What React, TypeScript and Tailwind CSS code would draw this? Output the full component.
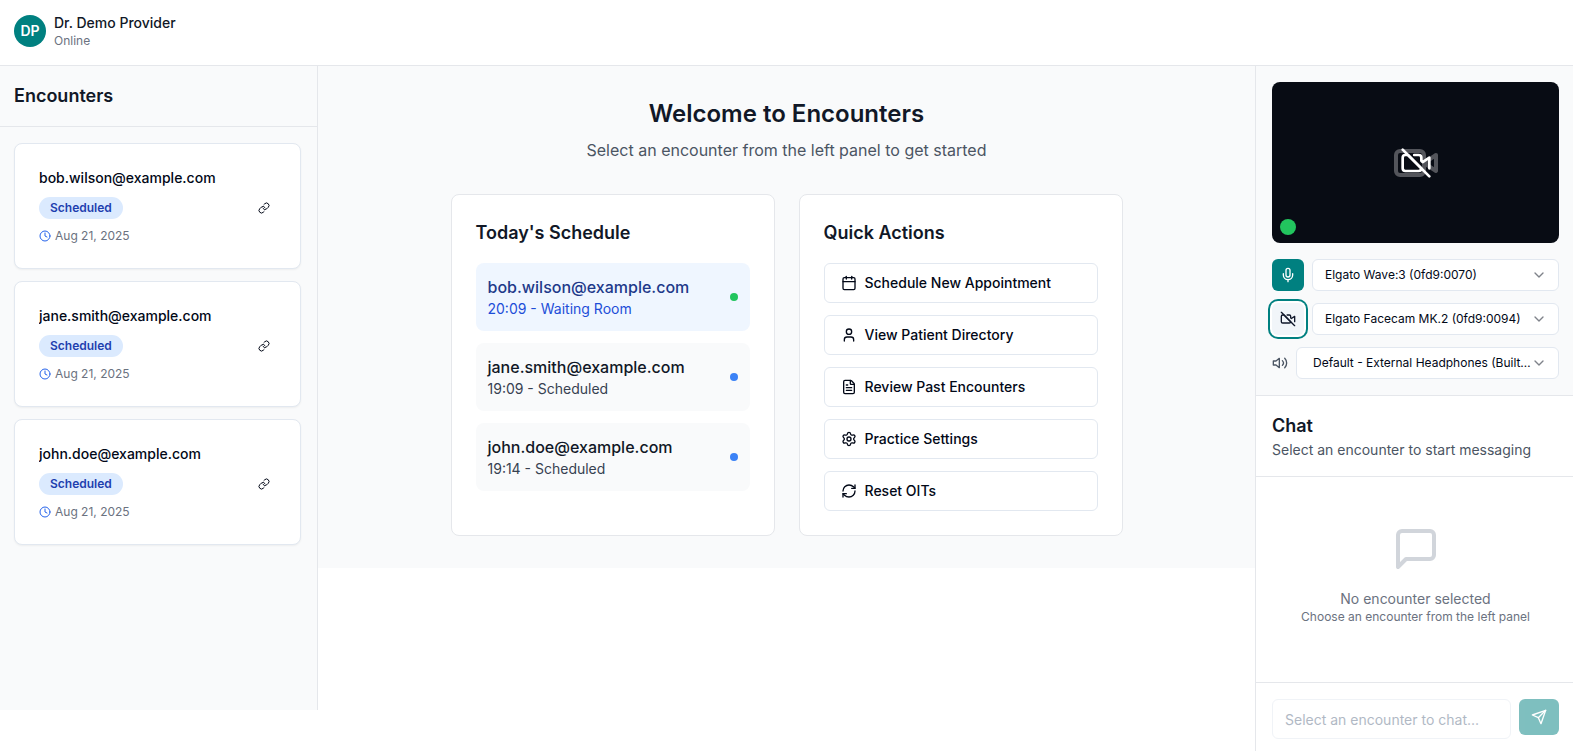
import { ReactNode } from "react";
import { Calendar, ChevronDown, Clock, FileText, LucideIcon, Mic, RefreshCw, Settings, User } from "lucide-react";

const encounters = [
  { email: "bob.wilson@example.com", status: "Scheduled", date: "Aug 21, 2025" },
  { email: "jane.smith@example.com", status: "Scheduled", date: "Aug 21, 2025" },
  { email: "john.doe@example.com", status: "Scheduled", date: "Aug 21, 2025" },
];

const schedule = [
  { email: "bob.wilson@example.com", detail: "20:09 - Waiting Room", active: true },
  { email: "jane.smith@example.com", detail: "19:09 - Scheduled", active: false },
  { email: "john.doe@example.com", detail: "19:14 - Scheduled", active: false },
];

const actions: { label: string; icon: LucideIcon }[] = [
  { label: "Schedule New Appointment", icon: Calendar },
  { label: "View Patient Directory", icon: User },
  { label: "Review Past Encounters", icon: FileText },
  { label: "Practice Settings", icon: Settings },
  { label: "Reset OITs", icon: RefreshCw },
];

function Glyph({ className, children }: { className: string; children: ReactNode }) {
  return (
    <svg
      viewBox="0 0 24 24"
      className={className}
      fill="none"
      stroke="currentColor"
      strokeWidth="2"
      strokeLinecap="round"
      strokeLinejoin="round"
      aria-hidden="true"
    >
      {children}
    </svg>
  );
}

function LinkIcon({ className }: { className: string }) {
  return (
    <Glyph className={className}>
      <path d="M10 13a5 5 0 0 0 7.54.54l3-3a5 5 0 0 0-7.07-7.07l-1.72 1.71" />
      <path d="M14 11a5 5 0 0 0-7.54-.54l-3 3a5 5 0 0 0 7.07 7.07l1.71-1.71" />
    </Glyph>
  );
}

function CameraIcon({ className }: { className: string }) {
  return (
    <Glyph className={className}>
      <path d="m22 8-6 4 6 4V8Z" />
      <rect width="14" height="12" x="2" y="6" rx="2" ry="2" />
    </Glyph>
  );
}

function CameraOffIcon({ className }: { className: string }) {
  return (
    <Glyph className={className}>
      <path d="M10.66 6H14a2 2 0 0 1 2 2v2.34l1 1L22 8v8" />
      <path d="M16 16a2 2 0 0 1-2 2H4a2 2 0 0 1-2-2V8a2 2 0 0 1 2-2h2l10 10Z" />
      <line x1="2" x2="22" y1="2" y2="22" />
    </Glyph>
  );
}

function SpeakerIcon({ className }: { className: string }) {
  return (
    <Glyph className={className}>
      <polygon points="11 5 6 9 2 9 2 15 6 15 11 19 11 5" />
      <path d="M15.54 8.46a5 5 0 0 1 0 7.07" />
      <path d="M19.07 4.93a10 10 0 0 1 0 14.14" />
    </Glyph>
  );
}

function MessageIcon({ className }: { className: string }) {
  return (
    <Glyph className={className}>
      <path d="M21 15a2 2 0 0 1-2 2H7l-4 4V5a2 2 0 0 1 2-2h14a2 2 0 0 1 2 2z" />
    </Glyph>
  );
}

function SendIcon({ className }: { className: string }) {
  return (
    <Glyph className={className}>
      <path d="m22 2-7 20-4-9-9-4Z" />
      <path d="M22 2 11 13" />
    </Glyph>
  );
}

function EncounterCard({ email, status, date }: (typeof encounters)[number]) {
  return (
    <li className="rounded-lg border border-[#e2e8f0] bg-white p-6 shadow-[0_1px_2px_rgba(0,0,0,0.05)]">
      <h3 className="truncate text-sm font-medium text-[#020817]">{email}</h3>
      <div className="mt-1 flex h-8 items-center justify-between">
        <span className="rounded-full border border-transparent bg-[#dbeafe] px-2.5 py-0.5 text-xs font-semibold text-[#1e40af]">
          {status}
        </span>
        <button type="button" aria-label={`Copy link for ${email}`} className="flex h-8 w-6 items-center justify-center text-[#020817]">
          <LinkIcon className="size-3" />
        </button>
      </div>
      <p className="mt-1 flex items-center gap-1 text-xs text-[#6b7280]">
        <Clock className="size-3 text-[#2563eb]" />
        {date}
      </p>
    </li>
  );
}

function Panel({ title, children }: { title: string; children: ReactNode }) {
  return (
    <section className="rounded-lg border border-[#e5e7eb] bg-white p-6">
      <h2 className="mb-4 text-lg/7 font-semibold text-[#111827]">{title}</h2>
      <div className="flex flex-col gap-3">{children}</div>
    </section>
  );
}

function DeviceSelect({ label, value, wide }: { label: string; value: string; wide?: boolean }) {
  return (
    <div className="relative min-w-0 flex-1">
      <select
        aria-label={label}
        className={`h-8 w-full appearance-none truncate rounded-md border border-[#e2e8f0] bg-white text-xs text-[#020817] ${
          wide ? "pr-6 pl-4" : "pr-8 pl-3"
        }`}
      >
        <option>{value}</option>
      </select>
      <ChevronDown className="pointer-events-none absolute top-2 right-3 size-4 text-[#020817] opacity-50" />
    </div>
  );
}

export default function App() {
  return (
    <div className="flex min-h-screen flex-col bg-white font-[Inter,sans-serif] text-[#020817]">
      <header className="flex items-center gap-2 border-b border-[#e5e7eb] pt-[13px] pr-4 pb-4 pl-3.5">
        <div className="flex size-8 items-center justify-center rounded-full bg-[#008080] text-sm font-semibold text-white">DP</div>
        <div>
          <p className="text-sm font-medium text-[#111827]">Dr. Demo Provider</p>
          <p className="text-xs text-[#6b7280]">Online</p>
        </div>
      </header>

      <div className="flex flex-1 items-start">
        <aside className="h-[calc(100vh-107px)] w-[318px] shrink-0 border-r border-[#e5e7eb] bg-[#f9fafb]">
          <div className="border-b border-[#e5e7eb] py-4 pr-4 pl-3.5">
            <h2 className="text-lg/7 font-semibold text-[#111827]">Encounters</h2>
          </div>
          <ul className="flex flex-col gap-3 py-4 pr-4 pl-3.5">
            {encounters.map((encounter) => (
              <EncounterCard key={encounter.email} {...encounter} />
            ))}
          </ul>
        </aside>

        <main className="min-w-0 flex-1 bg-[#f9fafb] p-8">
          <div className="mx-auto max-w-2xl">
            <div className="mb-8 text-center">
              <h1 className="mb-2 text-2xl/8 font-semibold text-[#111827]">Welcome to Encounters</h1>
              <p className="text-base text-[#4b5563]">Select an encounter from the left panel to get started</p>
            </div>
            <div className="grid grid-cols-2 gap-6">
              <Panel title="Today's Schedule">
                {schedule.map(({ email, detail, active }) => (
                  <div key={email} className={`flex items-center justify-between rounded-lg p-3 ${active ? "bg-[#eff6ff]" : "bg-[#f9fafb]"}`}>
                    <div>
                      <p className={`text-base font-medium ${active ? "text-[#1e3a8a]" : "text-[#111827]"}`}>{email}</p>
                      <p className={`text-sm ${active ? "text-[#1d4ed8]" : "text-[#374151]"}`}>{detail}</p>
                    </div>
                    <span className={`size-2 rounded-full ${active ? "bg-[#22c55e]" : "bg-[#3b82f6]"}`} />
                  </div>
                ))}
              </Panel>
              <Panel title="Quick Actions">
                {actions.map(({ label, icon: Icon }) => (
                  <button
                    key={label}
                    type="button"
                    className="flex h-10 items-center gap-2 rounded-md border border-[#e2e8f0] bg-white px-4 text-sm font-medium text-[#020817]"
                  >
                    <Icon className="size-4" />
                    {label}
                  </button>
                ))}
              </Panel>
            </div>
          </div>
        </main>

        <aside className="flex w-[318px] shrink-0 flex-col self-stretch border-l border-[#e5e7eb]">
          <div className="border-b border-[#e5e7eb] bg-[#f9fafb] py-4 pr-3.5 pl-4">
            <div className="relative flex aspect-video items-center justify-center rounded-lg bg-[#080c14]">
              <CameraIcon className="size-12 text-[#53555b]" />
              <CameraOffIcon className="absolute size-8 text-white" />
              <span className="absolute bottom-2 left-2 size-4 rounded-full bg-[#22c55e]" />
            </div>
            <div className="mt-4 flex flex-col gap-3">
              <div className="flex items-center gap-2">
                <button type="button" aria-label="Mute microphone" className="flex size-8 items-center justify-center rounded-md bg-[#008080] text-white">
                  <Mic className="size-4" />
                </button>
                <DeviceSelect label="Microphone" value="Elgato Wave:3 (0fd9:0070)" />
              </div>
              <div className="flex items-center gap-2">
                <button
                  type="button"
                  aria-label="Turn on camera"
                  className="flex size-8 items-center justify-center rounded-md bg-[#f1f5f9] text-[#0f172a] ring-2 ring-[#008080] ring-offset-2 ring-offset-white"
                >
                  <CameraOffIcon className="size-4" />
                </button>
                <DeviceSelect label="Camera" value="Elgato Facecam MK.2 (0fd9:0094)" />
              </div>
              <div className="flex items-center gap-2">
                <SpeakerIcon className="size-4 text-[#4b5563]" />
                <DeviceSelect label="Speaker" value="Default - External Headphones (Built-in)" wide />
              </div>
            </div>
          </div>

          <div className="border-b border-[#e5e7eb] py-4 pr-3.5 pl-4">
            <h2 className="text-lg/7 font-semibold text-[#111827]">Chat</h2>
            <p className="text-sm text-[#4b5563]">Select an encounter to start messaging</p>
          </div>

          <div className="flex flex-1 flex-col items-center pt-12 pr-3.5 pb-4 pl-4 text-center text-[#6b7280]">
            <MessageIcon className="mb-4 size-12 text-[#d1d5db]" />
            <p className="text-sm">No encounter selected</p>
            <p className="text-xs">Choose an encounter from the left panel</p>
          </div>

          <form className="flex gap-2 border-t border-[#e5e7eb] pt-4 pr-3.5 pb-3 pl-4" onSubmit={(event) => event.preventDefault()}>
            <input
              type="text"
              disabled
              aria-label="Message"
              placeholder="Select an encounter to chat..."
              className="h-10 min-w-0 flex-1 rounded-md border border-[#e2e8f0] bg-white px-3 text-sm opacity-50 placeholder:text-[#64748b]"
            />
            <button type="submit" disabled aria-label="Send message" className="flex h-9 w-10 items-center justify-center rounded-md bg-[#008080] text-white opacity-50">
              <SendIcon className="size-4" />
            </button>
          </form>
        </aside>
      </div>
    </div>
  );
}
